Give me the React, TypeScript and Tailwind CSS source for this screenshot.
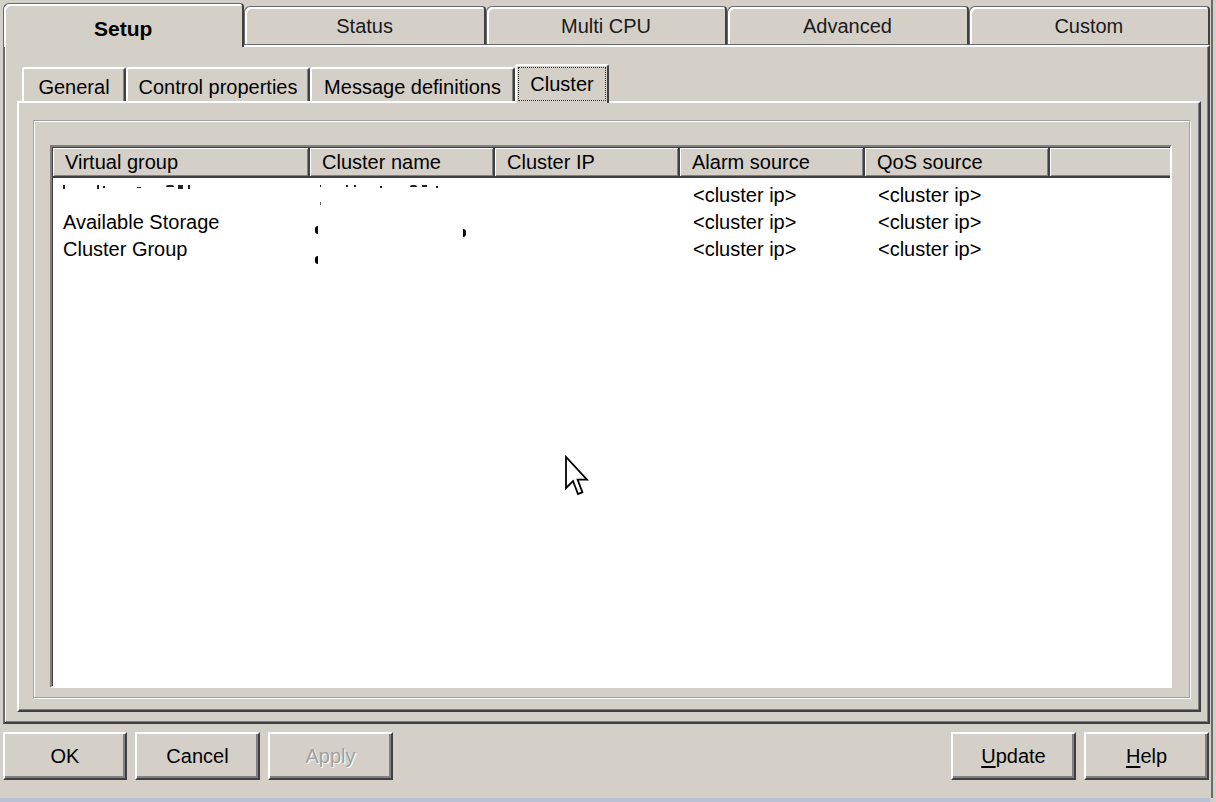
import React from "react";

const cols = [
  { name: "Virtual group", w: "w-[257px]" },
  { name: "Cluster name", w: "w-[185px]" },
  { name: "Cluster IP", w: "w-[185px]" },
  { name: "Alarm source", w: "w-[185px]" },
  { name: "QoS source", w: "w-[185px]" },
];

function TopTab({ label, selected }: { label: string; selected?: boolean }) {
  if (selected) {
    return (
      <div className="relative z-10 flex-1 h-[44px] -mb-[2px] bg-[#d4d0c8] rounded-tl-[6px] rounded-tr-[4px] border-t border-l border-t-[#6a6a6a] border-l-[#6a6a6a] border-r-2 border-r-[#404040] shadow-[inset_2px_2px_0_#ffffff] flex items-center justify-center pt-[6px] font-bold text-[21px]">
        {label}
      </div>
    );
  }
  return (
    <div className="flex-1 h-[39px] bg-[#d4d0c8] rounded-tl-[6px] rounded-tr-[4px] border-t border-l border-b border-t-[#6a6a6a] border-l-[#6a6a6a] border-b-[#6a6a6a] border-r-2 border-r-[#404040] shadow-[inset_2px_2px_0_#ffffff] flex items-center justify-center text-[#1a1a1a]">
      {label}
    </div>
  );
}

function SubTab({ label, w, selected }: { label: string; w: string; selected?: boolean }) {
  if (selected) {
    return (
      <div className={`relative z-10 ${w} h-[39px] -mb-[2px] bg-[#d4d0c8] rounded-t-[3px] border-t-2 border-l-2 border-t-white border-l-white border-r-2 border-r-[#404040] flex items-start justify-center pt-[1px]`}>
        <div className="border border-dotted border-[#303030] h-[34px] px-[11px] flex items-center">{label}</div>
      </div>
    );
  }
  return (
    <div className={`${w} h-[34px] bg-[#d4d0c8] rounded-t-[3px] border-t-2 border-l-2 border-t-white border-l-white border-r-2 border-r-[#404040] shadow-[inset_-1px_0_0_#808080] flex items-center justify-center pt-[4px]`}>
      {label}
    </div>
  );
}

function Btn({ children, w, disabled }: { children: React.ReactNode; w: string; disabled?: boolean }) {
  return (
    <div
      className={`${w} h-[48px] bg-[#d4d0c8] border-t-2 border-l-2 border-t-white border-l-white border-r-2 border-b-2 border-r-[#404040] border-b-[#404040] shadow-[inset_-2px_-2px_0_#808080] flex items-center justify-center ${
        disabled ? "text-[#a0a0a0] [text-shadow:1px_1px_0_#ffffff]" : "text-black"
      }`}
    >
      {children}
    </div>
  );
}

function Cursor() {
  return (
    <svg className="absolute left-[564px] top-[455px]" width="26" height="44" viewBox="0 0 13 22">
      <path
        d="M1 1 L1 16.5 L4.5 13 L7 19.5 L9.2 18.6 L6.8 12.3 L11.5 12.3 Z"
        fill="#ffffff"
        stroke="#000000"
        strokeWidth="0.9"
        strokeLinejoin="miter"
      />
    </svg>
  );
}

function Speck({ cls }: { cls: string }) {
  return <div className={`absolute bg-[#202020] ${cls}`} />;
}

export default function App() {
  const rows = [
    { g: "", ip: "", alarm: "<cluster ip>", qos: "<cluster ip>" },
    { g: "Available Storage", ip: "", alarm: "<cluster ip>", qos: "<cluster ip>" },
    { g: "Cluster Group", ip: "", alarm: "<cluster ip>", qos: "<cluster ip>" },
  ];

  return (
    <div className="relative w-[1216px] h-[802px] bg-[#d4d0c8] overflow-hidden flex font-['Liberation_Sans',Arial,sans-serif] text-[20px] text-black leading-none">
      <div className="w-[1210px] h-full pl-[3px] flex flex-col">
        {/* top tabs */}
        <div className="pt-[3px]">
          <div className="h-[42px] flex items-end">
            <TopTab label="Setup" selected />
            <TopTab label="Status" />
            <TopTab label="Multi CPU" />
            <TopTab label="Advanced" />
            <TopTab label="Custom" />
          </div>
        </div>

        {/* outer panel */}
        <div className="h-[679px] border-t-2 border-t-white border-l-2 border-l-[#6a6a6a] border-r-2 border-r-[#404040] border-b-2 border-b-[#404040] shadow-[inset_1px_0_0_#ffffff,inset_-1px_-1px_0_#808080] pt-[20px] pl-[12px] pr-[7px] pb-[10px] flex flex-col">
          {/* sub tabs */}
          <div className="h-[34px] pl-[5px] flex items-end">
            <SubTab label="General" w="w-[104px]" />
            <SubTab label="Control properties" w="w-[184px]" />
            <SubTab label="Message definitions" w="w-[205px]" />
            <SubTab label="Cluster" w="w-[94px]" selected />
          </div>

          {/* inner panel */}
          <div className="flex-1 border-t-2 border-l-2 border-t-white border-l-white border-r-2 border-b-2 border-r-[#404040] border-b-[#404040] shadow-[inset_-1px_-1px_0_#808080] pt-[17px] pl-[14px] pr-[9px] pb-[12px] flex flex-col">
            {/* frame */}
            <div className="flex-1 border border-[#a0a0a0] shadow-[inset_1px_1px_0_#ffffff,1px_1px_0_#ffffff] pt-[24px] pl-[16px] pr-[17px] pb-[9px] flex flex-col">
              {/* list */}
              <div className="flex-1 border-t-2 border-l-2 border-t-[#808080] border-l-[#808080] border-r-2 border-b-2 border-r-white border-b-white flex flex-col">
                <div className="flex-1 border-t border-l border-t-[#404040] border-l-[#404040] bg-white flex flex-col">
                  {/* header */}
                  <div className="h-[30px] flex bg-[#d4d0c8]">
                    {cols.map((c) => (
                      <div
                        key={c.name}
                        className={`${c.w} h-full border-r-2 border-b-2 border-r-[#404040] border-b-[#404040] shadow-[inset_1px_1px_0_#ffffff,inset_-1px_-1px_0_#808080] pl-[12px] flex items-center`}
                      >
                        {c.name}
                      </div>
                    ))}
                    <div className="flex-1 h-full border-b-2 border-b-[#404040] shadow-[inset_1px_1px_0_#ffffff,inset_0_-1px_0_#808080]" />
                  </div>

                  {/* rows */}
                  <div className="pt-[3px] flex flex-col">
                    {rows.map((r, i) => (
                      <div key={i} className="h-[27px] flex">
                        <div className="relative w-[257px] pl-[10px] flex items-center">
                          {i === 0 ? (
                            <>
                              <Speck cls="left-[10px] top-[4px] w-[2px] h-[4px]" />
                              <Speck cls="left-[44px] top-[4px] w-[2px] h-[4px]" />
                              <Speck cls="left-[50px] top-[5px] w-[2px] h-[2px]" />
                              <Speck cls="left-[84px] top-[6px] w-[4px] h-[1px]" />
                              <Speck cls="left-[113px] top-[4px] w-[8px] h-[2px] rounded-t-full" />
                              <Speck cls="left-[125px] top-[4px] w-[5px] h-[4px]" />
                              <Speck cls="left-[135px] top-[4px] w-[2px] h-[4px]" />
                            </>
                          ) : (
                            r.g
                          )}
                        </div>
                        <div className="relative w-[185px]">
                          {i === 0 && (
                            <>
                              <Speck cls="left-[10px] top-[4px] w-[1px] h-[2px]" />
                              <Speck cls="left-[36px] top-[4px] w-[2px] h-[2px]" />
                              <Speck cls="left-[44px] top-[4px] w-[2px] h-[2px]" />
                              <Speck cls="left-[70px] top-[5px] w-[2px] h-[2px]" />
                              <Speck cls="left-[100px] top-[4px] w-[7px] h-[2px] rounded-t-full" />
                              <Speck cls="left-[112px] top-[4px] w-[5px] h-[2px]" />
                              <Speck cls="left-[126px] top-[5px] w-[2px] h-[2px]" />
                              <Speck cls="left-[10px] top-[21px] w-[1px] h-[3px] bg-[#606060]" />
                            </>
                          )}
                          {i === 1 && (
                            <>
                              <Speck cls="left-[5px] top-[18px] w-[3px] h-[8px] rounded-l-full bg-black" />
                              <Speck cls="left-[153px] top-[21px] w-[3px] h-[8px] rounded-r-full bg-black" />
                            </>
                          )}
                          {i === 2 && <Speck cls="left-[5px] top-[21px] w-[3px] h-[8px] rounded-l-full bg-black" />}
                        </div>
                        <div className="w-[185px] pl-[12px] flex items-center">{r.ip}</div>
                        <div className="w-[185px] pl-[13px] flex items-center">{r.alarm}</div>
                        <div className="w-[185px] pl-[13px] flex items-center">{r.qos}</div>
                        <div className="flex-1" />
                      </div>
                    ))}
                  </div>
                </div>
              </div>
            </div>
          </div>
        </div>

        {/* buttons */}
        <div className="h-[74px] pt-[8px] pr-[1px] flex justify-between">
          <div className="flex gap-[8px]">
            <Btn w="w-[124px]">OK</Btn>
            <Btn w="w-[125px]">Cancel</Btn>
            <Btn w="w-[125px]" disabled>
              Apply
            </Btn>
          </div>
          <div className="flex gap-[8px]">
            <Btn w="w-[125px]">
              <span>
                <span className="underline underline-offset-[3px]">U</span>pdate
              </span>
            </Btn>
            <Btn w="w-[125px]">
              <span>
                <span className="underline underline-offset-[3px]">H</span>elp
              </span>
            </Btn>
          </div>
        </div>

        <div className="h-[4px] -ml-[3px] bg-[#b8c2d4]" />
      </div>
      <div className="w-[1px] h-full" />
      <div className="w-[2px] h-[798px] bg-[#6a6a6a]" />
      <Cursor />
    </div>
  );
}
